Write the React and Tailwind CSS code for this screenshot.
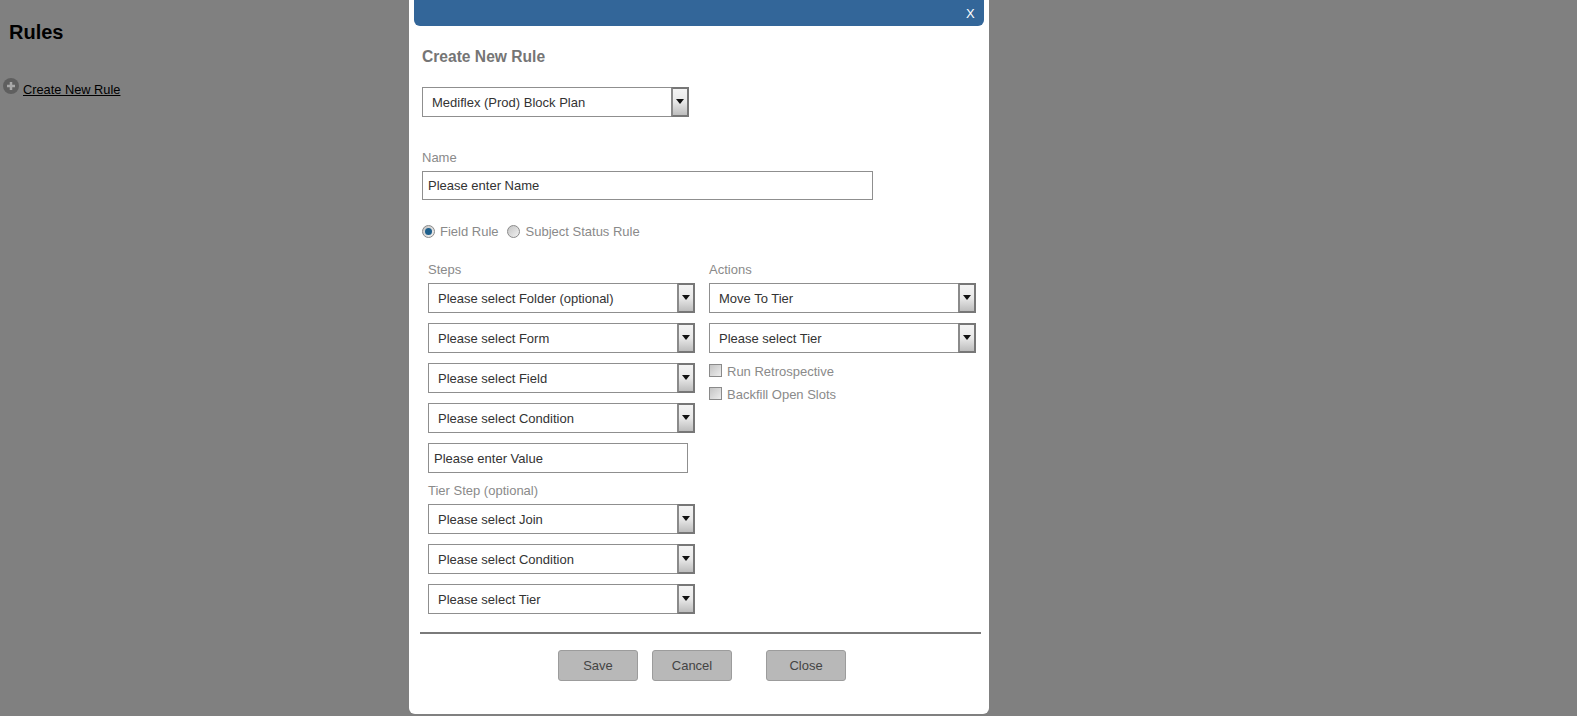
const Select = ({ label, className = "w-[267px]" }) => (
  <div className={`h-[30px] flex border border-[#8f8f8f] bg-white ${className}`}>
    <div className="flex-1 pl-[9px] leading-[30px] text-[13px] text-[#333]">{label}</div>
    <div className="w-[18px] -my-px -mr-px border-2 border-[#777] border-l-[#8a8a8a] flex justify-center pt-[10px] bg-gradient-to-b from-[#f4f4f4] via-[#e8e8e8] to-[#bdbdbd]">
      <svg width="8" height="5" viewBox="0 0 8 5">
        <path d="M0 0h8L4 5z" fill="#111" />
      </svg>
    </div>
  </div>
);

const TextBox = ({ value, className }) => (
  <div className={`h-[29px] border border-[#8f8f8f] bg-white pl-[5px] leading-[28px] text-[13px] text-[#333] ${className}`}>
    {value}
  </div>
);

const Label = ({ children, className = "" }) => (
  <div className={`text-[13px] leading-[16px] text-[#8a8a8a] ${className}`}>{children}</div>
);

const Radio = ({ checked }) => (
  <span className="-mt-[2px] w-[13px] h-[13px] rounded-full border border-[#8a8a8a] bg-gradient-to-br from-[#c4c4c4] to-[#f2f2f2] flex items-center justify-center">
    {checked && <span className="w-[7px] h-[7px] rounded-full bg-[#1d5f8c]" />}
  </span>
);

const Check = () => (
  <span className="-mt-[3px] w-[13px] h-[13px] border border-[#8a8a8a] bg-gradient-to-br from-[#c4c4c4] to-[#ededed]" />
);

const Btn = ({ children, className = "" }) => (
  <div className={`w-[80px] h-[31px] rounded-[3px] border border-[#9c9c9c] bg-[#b8b8b8] text-center leading-[29px] text-[13px] text-[#444] ${className}`}>
    {children}
  </div>
);

export default function App() {
  return (
    <div className="relative h-[716px] overflow-hidden bg-[#808080] font-['Liberation_Sans',Arial,sans-serif]">
      <div className="pl-[9px] pt-[20px]">
        <h1 className="text-[20px] leading-[24px] font-bold text-black">Rules</h1>
        <div className="mt-[34px] -ml-[6px] flex items-start gap-[4px]">
          <svg width="16" height="16" viewBox="0 0 16 16" className="shrink-0">
            <circle cx="8" cy="8" r="8" fill="#5f5f5f" />
            <path d="M8 4v8M4 8h8" stroke="#a8a8a8" strokeWidth="2.5" />
          </svg>
          <a className="mt-[4px] text-[12.8px] leading-[16px] text-black underline">Create New Rule</a>
        </div>
      </div>

      <div className="absolute inset-0 pl-[409px]">
        <div className="w-[580px] h-[714px] rounded-b-[6px] bg-white px-[5px]">
          <div className="h-[26px] rounded-b-[6px] bg-[#336699] flex justify-end pr-[5px] text-[13px] leading-[28px] text-white">
            <span className="w-[13px]">X</span>
          </div>

          <div className="pl-[8px]">
            <h2 className="mt-[22px] text-[15.6px] leading-[18px] font-bold text-[#757575]">Create New Rule</h2>
            <Select label="Mediflex (Prod) Block Plan" className="w-[267px] mt-[21px]" />
            <Label className="mt-[33px]">Name</Label>
            <TextBox value="Please enter Name" className="mt-[5px] w-[451px]" />

            <div className="mt-[24px] flex items-center h-[16px] text-[13px] text-[#8a8a8a]">
              <Radio checked />
              <span className="ml-[5px]">Field Rule</span>
              <span className="ml-[8px]"><Radio /></span>
              <span className="ml-[6px]">Subject Status Rule</span>
            </div>

            <div className="mt-[22px] ml-[6px] flex gap-[14px]">
              <div className="w-[267px]">
                <Label>Steps</Label>
                <div className="mt-[5px] flex flex-col gap-[10px]">
                  <Select label="Please select Folder (optional)" />
                  <Select label="Please select Form" />
                  <Select label="Please select Field" />
                  <Select label="Please select Condition" />
                  <TextBox value="Please enter Value" className="w-[260px] h-[30px] leading-[29px]" />
                </div>
                <Label className="mt-[10px]">Tier Step (optional)</Label>
                <div className="mt-[5px] flex flex-col gap-[10px]">
                  <Select label="Please select Join" />
                  <Select label="Please select Condition" />
                  <Select label="Please select Tier" />
                </div>
              </div>

              <div className="w-[267px]">
                <Label>Actions</Label>
                <div className="mt-[5px] flex flex-col gap-[10px]">
                  <Select label="Move To Tier" />
                  <Select label="Please select Tier" />
                </div>
                <div className="mt-[11px] flex flex-col gap-[7px] text-[13px] leading-[16px] text-[#8a8a8a]">
                  <div className="flex items-center gap-[5px]"><Check />Run Retrospective</div>
                  <div className="flex items-center gap-[5px]"><Check />Backfill Open Slots</div>
                </div>
              </div>
            </div>
          </div>

          <div className="mt-[18px] ml-[6px] mr-[3px] h-[2px] bg-[#7a7a7a]" />
          <div className="mt-[16px] pl-[144px] flex">
            <Btn>Save</Btn>
            <Btn className="ml-[14px]">Cancel</Btn>
            <Btn className="ml-[34px]">Close</Btn>
          </div>
        </div>
      </div>
    </div>
  );
}
